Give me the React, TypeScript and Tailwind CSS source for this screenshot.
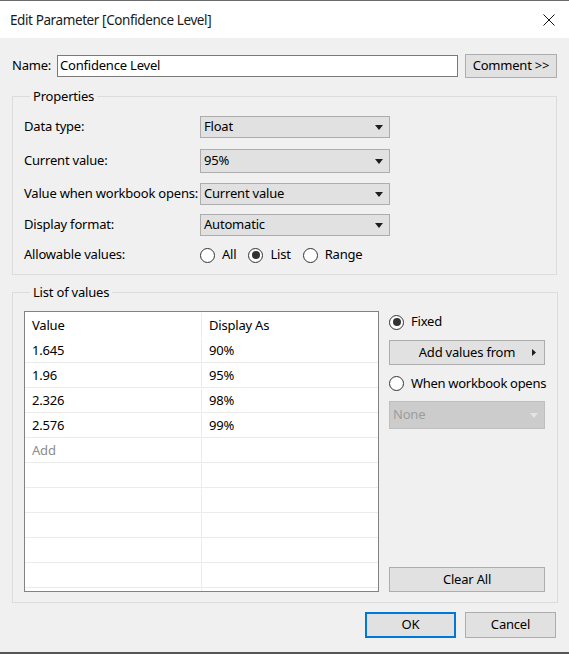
import { useState } from 'react';

const FONT = { fontFamily: '"Noto Sans", "Open Sans", Arial, sans-serif' };

function Combo({ value, h = 'h-[22px]', disabled = false }: { value: string; h?: string; disabled?: boolean }) {
  return (
    <div
      className={`${h} w-[190px] flex items-center justify-between pl-[3px] pr-[6px] border ${
        disabled ? 'bg-[#cccccc] border-[#bfbfbf] text-[#9c9c9c]' : 'bg-[#e1e1e1] border-[#adadad] text-black'
      }`}
    >
      <span className="whitespace-nowrap">{value}</span>
      <svg width="8" height="5" viewBox="0 0 8 5">
        <path d="M0 0h8L4 5z" fill={disabled ? '#e4e4e4' : '#1e1e1e'} />
      </svg>
    </div>
  );
}

function Radio({ checked, label, onClick }: { checked: boolean; label: string; onClick?: () => void }) {
  return (
    <button onClick={onClick} className="flex items-center gap-[7px] whitespace-nowrap">
      <span className="shrink-0 w-[15px] h-[15px] rounded-full border border-[#333333] bg-white flex items-center justify-center">
        {checked && <span className="w-[8px] h-[8px] rounded-full bg-[#333333]" />}
      </span>
      <span>{label}</span>
    </button>
  );
}

const rows = [
  { value: '1.645', display: '90%' },
  { value: '1.96', display: '95%' },
  { value: '2.326', display: '98%' },
  { value: '2.576', display: '99%' },
];

export default function App() {
  const [allowable, setAllowable] = useState('List');
  const [source, setSource] = useState('Fixed');

  return (
    <div style={FONT} className="w-[569px] h-[654px] flex flex-col bg-[#f0f0f0] text-[13px] tracking-[-0.2px] text-black border-t border-b-2 border-t-[#6b6b6b] border-b-[#555555]">
      {/* Title bar */}
      <div className="h-[37px] bg-white flex items-center justify-between pl-[10px] pr-[14px]">
        <span className="text-[13.5px] tracking-[-0.4px] text-[#1a1a1a] pt-[2px]">Edit Parameter [Confidence Level]</span>
        <svg width="12" height="12" viewBox="0 0 12 12">
          <path d="M0.5 0.5L11.5 11.5M11.5 0.5L0.5 11.5" stroke="#111" strokeWidth="1" />
        </svg>
      </div>

      {/* Body */}
      <div className="flex-1 flex flex-col px-[12px] pt-[16px]">
        {/* Name */}
        <div className="flex items-center h-[24px]">
          <span className="w-[45px]">Name:</span>
          <div className="w-[401px] h-[22px] bg-white border border-[#7a7a7a] flex items-center pl-[2px]">
            Confidence Level
          </div>
          <button className="ml-[7px] w-[92px] h-[24px] bg-[#e1e1e1] border border-[#adadad]">Comment &gt;&gt;</button>
        </div>

        {/* Properties */}
        <fieldset className="mt-[10px] border border-[#dcdcdc] pl-[11px] pr-[11px] pb-[8px]">
          <legend className="ml-[6px] px-[3px] leading-[16px]">Properties</legend>
          <div className="grid grid-cols-[176px_190px] items-center mt-[12px] h-[22px] whitespace-nowrap">
            <span>Data type:</span>
            <Combo value="Float" />
          </div>
          <div className="grid grid-cols-[176px_190px] items-center mt-[11px] h-[24px] whitespace-nowrap">
            <span>Current value:</span>
            <Combo value="95%" h="h-[24px]" />
          </div>
          <div className="grid grid-cols-[176px_190px] items-center mt-[10px] h-[22px] whitespace-nowrap">
            <span>Value when workbook opens:</span>
            <Combo value="Current value" />
          </div>
          <div className="grid grid-cols-[176px_190px] items-center mt-[9px] h-[22px] whitespace-nowrap">
            <span>Display format:</span>
            <Combo value="Automatic" />
          </div>
          <div className="grid grid-cols-[176px_1fr] items-center mt-[8px] h-[22px] whitespace-nowrap">
            <span>Allowable values:</span>
            <div className="flex items-center gap-[12px]">
              {['All', 'List', 'Range'].map((o) => (
                <Radio key={o} label={o} checked={allowable === o} onClick={() => setAllowable(o)} />
              ))}
            </div>
          </div>
        </fieldset>

        {/* List of values */}
        <fieldset className="mt-[9px] border border-[#dcdcdc] pl-[11px] pr-[12px] pb-[10px]">
          <legend className="ml-[6px] px-[3px] leading-[16px]">List of values</legend>
          <div className="flex mt-[11px] gap-[10px]">
            <div className="w-[355px] h-[281px] bg-white border border-[#828282] overflow-hidden">
              <div className="grid grid-cols-[177px_1fr] h-[26px] pt-[1px]">
                <div className="flex items-center pl-[7px] border-r border-[#ebebeb]">Value</div>
                <div className="flex items-center pl-[7px]">Display As</div>
              </div>
              {Array.from({ length: 11 }).map((_, i) => {
                const r = rows[i];
                return (
                  <div key={i} className="grid grid-cols-[177px_1fr] h-[25px] border-b border-[#ebebeb] pt-[1px]">
                    <div className={`flex items-center pl-[7px] border-r border-[#ebebeb] ${i === 4 ? 'text-[#8c8c8c]' : ''}`}>
                      {r ? r.value : i === 4 ? 'Add' : ''}
                    </div>
                    <div className="flex items-center pl-[7px]">{r ? r.display : ''}</div>
                  </div>
                );
              })}
            </div>

            <div className="w-[156px] flex flex-col">
              <div className="h-[21px] flex items-center pt-[1px]">
                <Radio label="Fixed" checked={source === 'Fixed'} onClick={() => setSource('Fixed')} />
              </div>
              <button className="mt-[8px] h-[25px] bg-[#e1e1e1] border border-[#adadad] flex items-center justify-center relative">
                Add values from
                <svg className="absolute right-[8px] top-[8px]" width="4" height="7" viewBox="0 0 4 7">
                  <path d="M0 0l4 3.5L0 7z" fill="#1e1e1e" />
                </svg>
              </button>
              <div className="mt-[8px] h-[21px] flex items-center tracking-[-0.3px]">
                <Radio
                  label="When workbook opens"
                  checked={source === 'When workbook opens'}
                  onClick={() => setSource('When workbook opens')}
                />
              </div>
              <div className="mt-[7px] [&>div]:w-[156px]">
                <Combo value="None" h="h-[28px]" disabled />
              </div>
              <button className="mt-auto h-[25px] bg-[#e1e1e1] border border-[#adadad]">Clear All</button>
            </div>
          </div>
        </fieldset>

        {/* Footer buttons */}
        <div className="flex justify-end gap-[9px] mt-[9px] pr-[1px]">
          <button className="w-[91px] h-[26px] bg-[#e1e1e1] border-2 border-[#0078d7]">OK</button>
          <button className="w-[91px] h-[26px] bg-[#e1e1e1] border border-[#adadad]">Cancel</button>
        </div>
      </div>
    </div>
  );
}
